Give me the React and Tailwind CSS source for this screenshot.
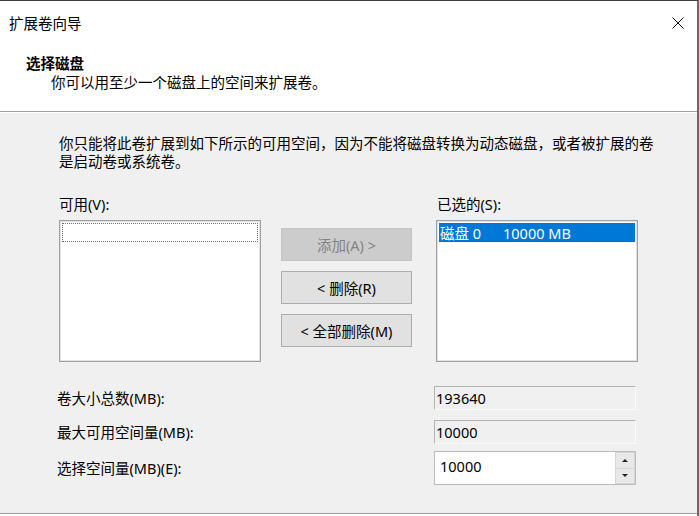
import React from "react";

const font = "font-['Noto_Sans','Noto_Sans_CJK_SC',sans-serif]";

function ListBox({ children }) {
    return (
        <div className="w-[202px] h-[142px] bg-white border border-[#a0a0a0] shadow-[inset_0_0_0_1px_#e3e3e3] p-[2px]">
            {children}
        </div>
    );
}

function WinButton({ children, disabled }) {
    return (
        <div
            className={
                disabled
                    ? "h-[33px] flex items-center justify-center bg-[#cccccc] border border-[#c4c4c4] text-[#838383]"
                    : "h-[33px] flex items-center justify-center bg-[#e1e1e1] border border-[#adadad] text-black"
            }
        >
            {children}
        </div>
    );
}

function ReadField({ value }) {
    return (
        <div className="w-[202px] h-[24px] flex items-center pl-[1px] bg-[#f0f0f0] border border-t-[#b4b4b4] border-l-[#b4b4b4] border-b-[#fbfbfb] border-r-[#fbfbfb]">
            {value}
        </div>
    );
}

export default function App() {
    return (
        <div className={`w-[699px] h-[516px] overflow-hidden bg-white border-t border-[#3f3f3f] border-r-2 border-r-[#6a6a6a] text-black text-[14.5px] leading-[19px] ${font}`}>
            {/* header */}
            <div className="h-[110px] bg-white">
                <div className="h-[44px] flex items-center justify-between pl-[9px] pr-[13px]">
                    <span>扩展卷向导</span>
                    <svg width="12" height="12" viewBox="0 0 12 12">
                        <path d="M0.5 0.5 L11.5 11.5 M11.5 0.5 L0.5 11.5" stroke="#111" strokeWidth="1" fill="none" />
                    </svg>
                </div>
                <div className="mt-[9px] pl-[26px]">
                    <div className="font-bold">选择磁盘</div>
                    <div className="pl-[25px]">你可以用至少一个磁盘上的空间来扩展卷。</div>
                </div>
            </div>
            <div className="h-px bg-[#a0a0a0]" />
            <div className="h-px bg-white" />

            {/* body */}
            <div className="h-[400px] bg-[#f0f0f0] pl-[59px] pt-[21px] leading-[18px]">
                <div className="whitespace-nowrap">
                    你只能将此卷扩展到如下所示的可用空间，因为不能将磁盘转换为动态磁盘，或者被扩展的卷
                    <br />
                    是启动卷或系统卷。
                </div>

                <div className="mt-[25px] flex">
                    <div className="w-[377px]">可用(V):</div>
                    <div className="pl-[1px]">已选的(S):</div>
                </div>

                <div className="mt-[7px] flex items-start">
                    <ListBox>
                        <div className="h-[19px] border border-dotted border-[#6e6e6e]" />
                    </ListBox>
                    <div className="ml-[20px] mt-[8px] w-[131px] flex flex-col gap-[10px]">
                        <WinButton disabled>添加(A) &gt;</WinButton>
                        <WinButton>&lt; 删除(R)</WinButton>
                        <WinButton>&lt; 全部删除(M)</WinButton>
                    </div>
                    <div className="ml-[24px]">
                        <ListBox>
                            <div className="h-[19px] flex items-center bg-[#0078d7] text-white pl-[1px] whitespace-nowrap">
                                <span className="w-[63px]">磁盘 0</span>
                                <span>10000 MB</span>
                            </div>
                        </ListBox>
                    </div>
                </div>

                <div className="mt-[24px] flex flex-col">
                    <div className="flex items-center">
                        <div className="w-[377px] -ml-[2px]">卷大小总数(MB):</div>
                        <ReadField value="193640" />
                    </div>
                    <div className="mt-[10px] flex items-center">
                        <div className="w-[377px] -ml-[2px]">最大可用空间量(MB):</div>
                        <ReadField value="10000" />
                    </div>
                    <div className="mt-[7px] flex items-center">
                        <div className="w-[377px] -ml-[2px]">选择空间量(MB)(E):</div>
                        <div className="w-[202px] h-[34px] flex border border-[#bcbcbc]">
                            <div className="flex-1 bg-white pl-[5px] pt-[5px]">10000</div>
                            <div className="w-[20px] flex flex-col bg-[#d6d6d6] p-px gap-px">
                                <div className="flex-1 bg-[#e8e8e8] flex items-center justify-center">
                                    <div className="w-0 h-0 border-x-[3px] border-x-transparent border-b-[3px] border-b-[#222]" />
                                </div>
                                <div className="flex-1 bg-[#e8e8e8] flex items-center justify-center">
                                    <div className="w-0 h-0 border-x-[3px] border-x-transparent border-t-[3px] border-t-[#222]" />
                                </div>
                            </div>
                        </div>
                    </div>
                </div>
            </div>
            <div className="h-px bg-[#a0a0a0]" />
            <div className="h-[2px] bg-white" />
        </div>
    );
}
